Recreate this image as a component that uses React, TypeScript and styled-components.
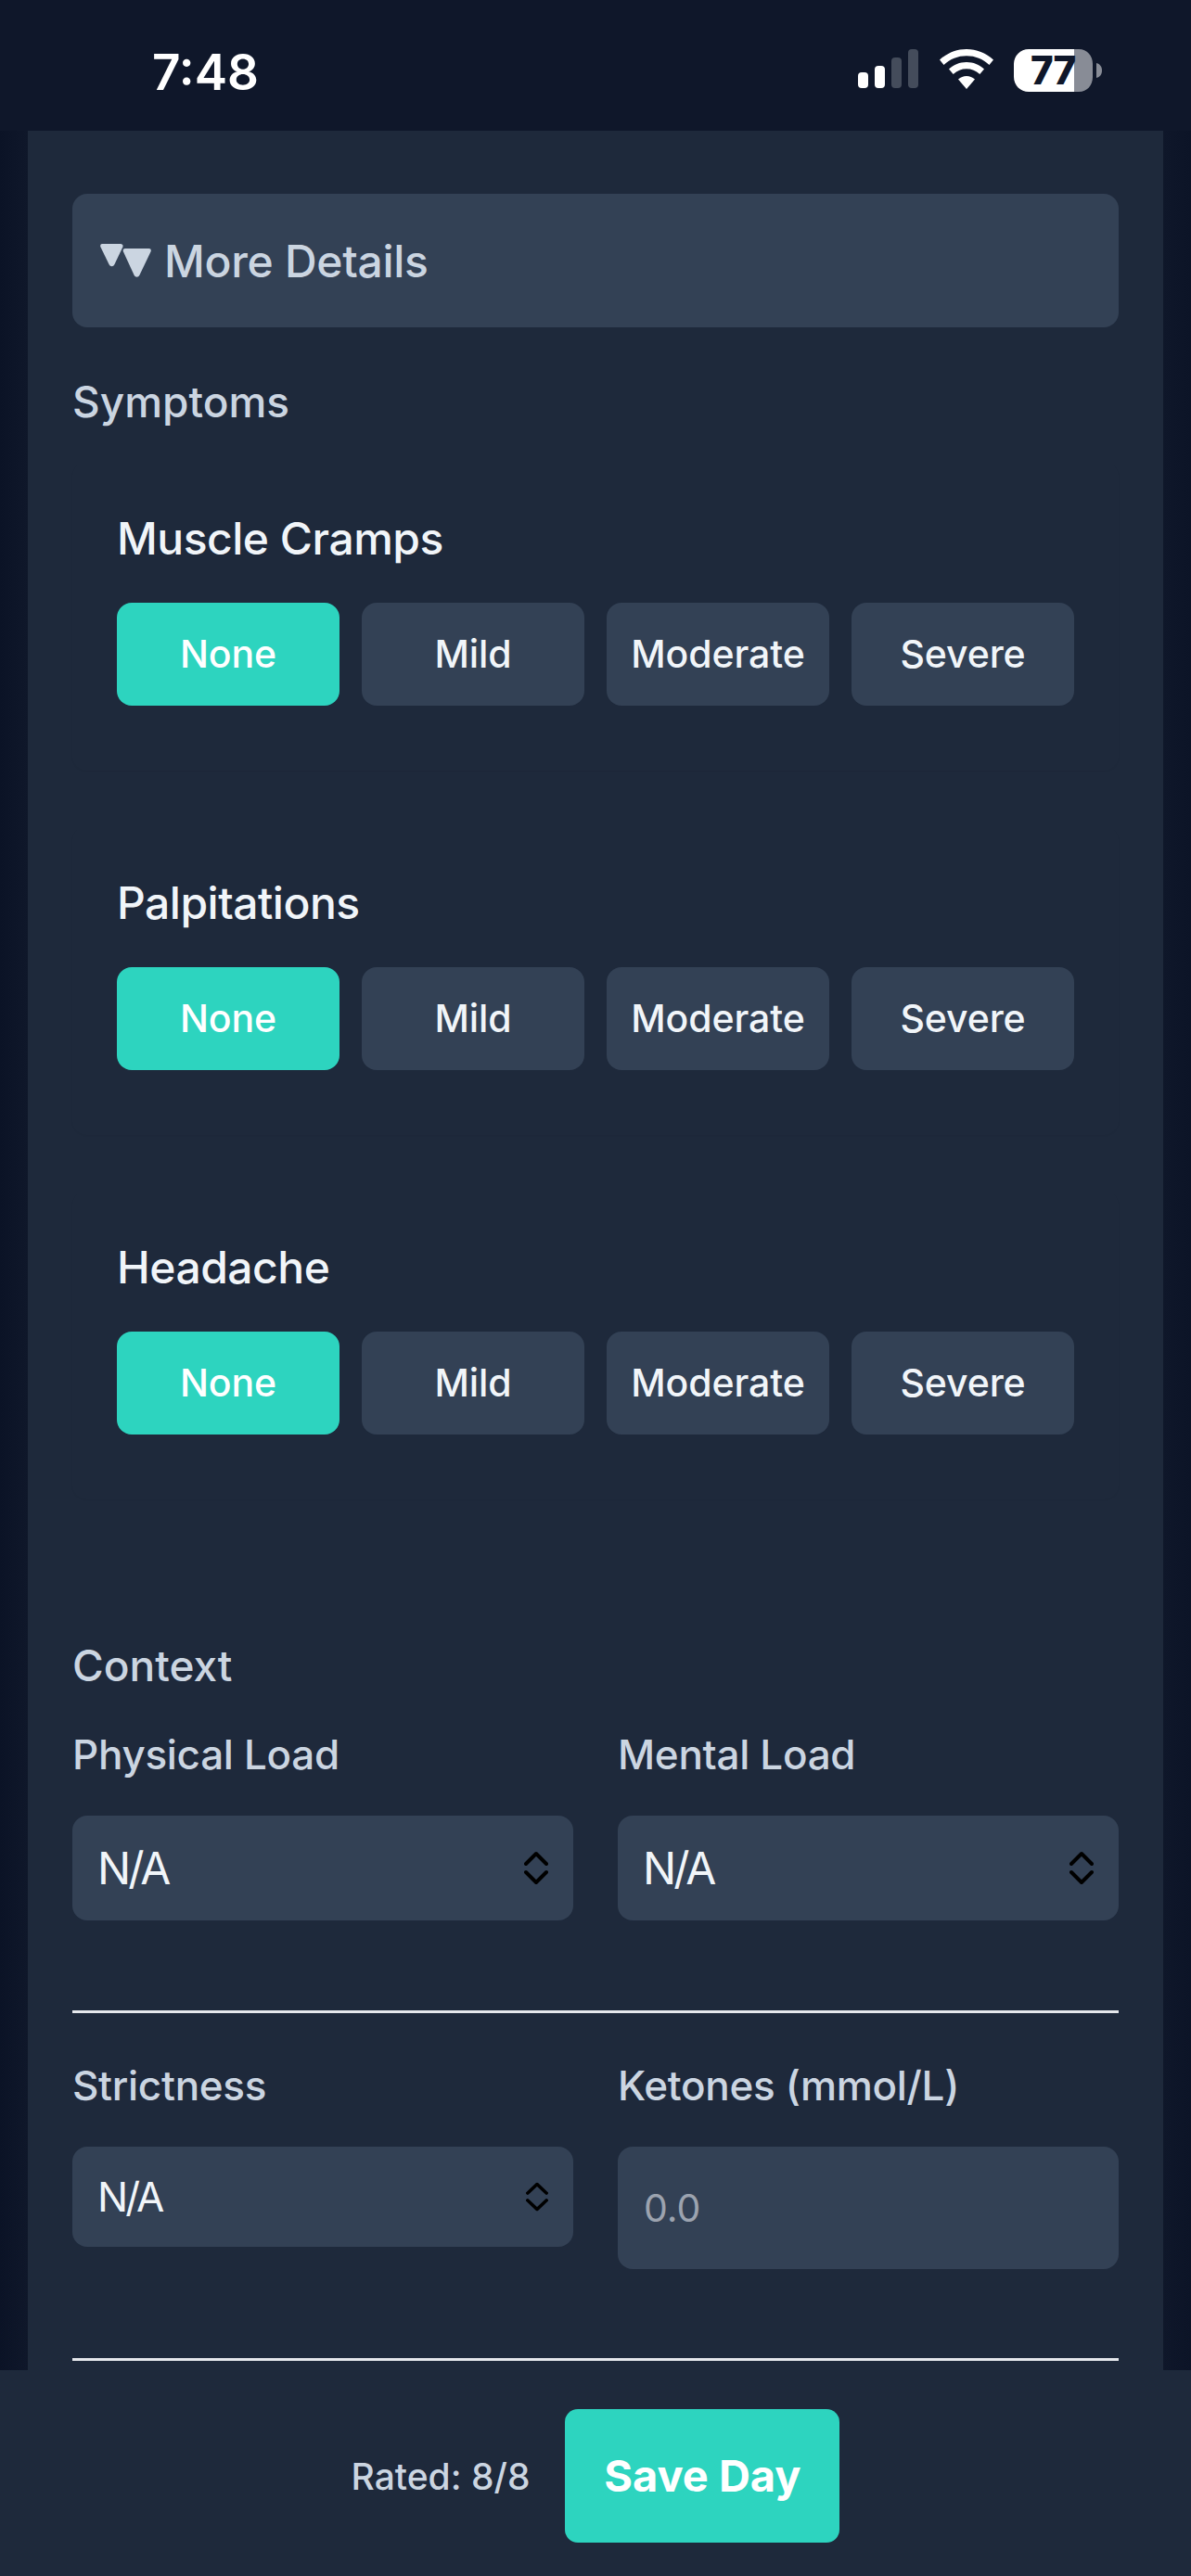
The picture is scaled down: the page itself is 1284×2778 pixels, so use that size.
import React from "react";
import styled, { createGlobalStyle } from "styled-components";

const Global = createGlobalStyle`
  html, body { margin: 0; padding: 0; background: #0f172a; }
  #root { width: 1284px; height: 2778px; overflow: hidden; }
  * { box-sizing: border-box; }
`;

const Screen = styled.div`
  width: 1284px;
  height: 2778px;
  display: flex;
  flex-direction: column;
  background: #0f172a;
  font-family: Inter, "Liberation Sans", sans-serif;
  overflow: hidden;
`;

const StatusBar = styled.div`
  height: 141px;
  flex: none;
  display: flex;
  align-items: flex-start;
  justify-content: space-between;
  padding: 50px 96px 0 164px;
  background: #0f172a;
`;

const Clock = styled.div`
  font-size: 53px;
  line-height: 56px;
  font-weight: 600;
  color: #fff;
`;

const StatusIcons = styled.div`
  display: flex;
  align-items: flex-start;
  gap: 22.5px;
  padding-top: 3px;
`;

const BatteryIcon = styled.svg`
  overflow: visible;
`;

const Middle = styled.div`
  flex: 1;
  min-height: 0;
  padding: 0 30px;
  background: linear-gradient(90deg, #0b1326 0, #0f172a 30px, #0f172a 1254px, #0c1427 1284px);
`;

const Panel = styled.main`
  height: 100%;
  padding: 68px 48px 0;
  background: #1e293b;
  overflow: hidden;
`;

const Disclosure = styled.div`
  height: 144px;
  display: flex;
  align-items: center;
  gap: 14px;
  padding: 2px 30px 0;
  border-radius: 16px;
  background: #334155;
  color: #cbd5e1;
  font-size: 48px;
  font-weight: 500;
  line-height: 58px;
  letter-spacing: -0.3px;
`;

const Marker = styled.svg`
  width: 55px;
  height: 36px;
  margin-top: -2px;
  flex: none;
`;

const SectionTitle = styled.h2<{ $top: number }>`
  margin: ${(p) => p.$top}px 0 0;
  font-size: 46px;
  line-height: 56px;
  font-weight: 500;
  color: #cbd5e1;
`;

const SymptomList = styled.div`
  margin-top: 37px;
  display: flex;
  flex-direction: column;
  gap: 60px;
`;

const SymptomCard = styled.section`
  height: 333px;
  padding: 48px;
  border-radius: 16px;
  box-shadow: 0 1px 2px rgba(0, 0, 0, 0.04);
`;

const SymptomName = styled.h3`
  margin: 0 0 35px;
  height: 69px;
  display: flex;
  align-items: center;
  font-size: 48px;
  line-height: 58px;
  font-weight: 550;
  letter-spacing: -0.5px;
  color: #f1f5f9;
`;

const SeverityRow = styled.div`
  display: grid;
  grid-template-columns: repeat(4, 1fr);
  gap: 24px;
`;

const Severity = styled.button<{ $on?: boolean }>`
  height: 111px;
  padding: 0 0 2px;
  border: 0;
  border-radius: 16px;
  font: 550 41px/50px Inter, "Liberation Sans", sans-serif;
  letter-spacing: -0.1px;
  color: ${(p) => (p.$on ? "#ffffff" : "#f1f5f9")};
  background: ${(p) => (p.$on ? "#2dd4bf" : "#334155")};
`;

const FieldGrid = styled.div<{ $top: number }>`
  display: grid;
  grid-template-columns: 540px 540px;
  gap: 48px;
  align-items: start;
  margin-top: ${(p) => p.$top}px;
`;

const Field = styled.div`
  display: flex;
  flex-direction: column;
`;

const FieldLabel = styled.label`
  height: 56px;
  margin-bottom: 38px;
  display: flex;
  align-items: center;
  font-size: 44px;
  font-weight: 500;
  letter-spacing: -0.3px;
  color: #cbd5e1;
`;

const SelectBox = styled.div<{ $h: number; $size: number }>`
  height: ${(p) => p.$h}px;
  display: flex;
  align-items: center;
  justify-content: space-between;
  padding: 0 27px 0 27px;
  border-radius: 16px;
  background: #334155;
  color: #f1f5f9;
  font-size: ${(p) => p.$size}px;
  font-weight: 400;
  letter-spacing: -3px;
`;

const InputBox = styled.div`
  height: 132px;
  display: flex;
  align-items: center;
  padding: 0 28px;
  border-radius: 16px;
  background: #334155;
  color: #9ca3af;
  font-size: 41px;
`;

const Rule = styled.hr<{ $top: number }>`
  margin: ${(p) => p.$top}px 0 0;
  border: 0;
  height: 3px;
  background: #e5e7eb;
`;

const Footer = styled.footer`
  flex: none;
  height: 222px;
  display: flex;
  align-items: flex-start;
  justify-content: center;
  gap: 38px;
  padding: 42px 0 0;
  background: #1e293b;
`;

const Rated = styled.span`
  height: 144px;
  display: flex;
  align-items: center;
  font-size: 39px;
  font-weight: 550;
  color: #cbd5e1;
`;

const Save = styled.button`
  width: 296px;
  height: 144px;
  border: 0;
  border-radius: 14px;
  background: #2dd4bf;
  color: #fff;
  font: 700 47px/58px Inter, "Liberation Sans", sans-serif;
`;

const Updown = ({ w = 26, h = 37 }: { w?: number; h?: number }) => (
  <svg width={w} height={h} viewBox="0 0 26 37" fill="none" stroke="#000" strokeWidth="4" strokeLinecap="round" strokeLinejoin="round" preserveAspectRatio="none">
    <path d="M2 14 13 3l11 11" />
    <path d="M2 23l11 11 11-11" />
  </svg>
);

const levels = ["None", "Mild", "Moderate", "Severe"];
const symptoms = ["Muscle Cramps", "Palpitations", "Headache"];

export default function App() {
  return (
    <Screen>
      <Global />
      <StatusBar>
        <Clock>7:48</Clock>
        <StatusIcons>
          <svg width="65" height="42" viewBox="0 0 65 42">
            <rect x="0" y="25" width="11" height="17" rx="4" fill="#fff" />
            <rect x="18" y="18" width="11" height="24" rx="4" fill="#fff" />
            <rect x="36" y="9" width="11" height="33" rx="4" fill="#444c5b" />
            <rect x="54" y="0" width="11" height="42" rx="4" fill="#444c5b" />
          </svg>
          <svg width="58" height="43" viewBox="0 0 58 43" fill="#fff">
            <path d="M29 0C18 0 8.500 4 0 11.500L4.500 17C11.500 10.500 19.500 7.200 29 7.200S46.500 10.500 53.500 17L58 11.500C49.500 4 40 0 29 0Z" />
            <path d="M29 14C21.500 14 15.500 16.700 10 21.500L14.700 27C19 23.200 23.500 21.300 29 21.300S39 23.200 43.300 27L48 21.500C42.500 16.700 36.500 14 29 14Z" />
            <path d="M29 29C25.500 29 22.800 30.200 20 32.500L29 43L38 32.500C35.200 30.200 32.500 29 29 29Z" />
          </svg>
          <BatteryIcon width="95" height="46" viewBox="0 0 95 46">
            <path d="M16 0H65V46H16C7 46 0 39 0 30V16C0 7 7 0 16 0Z" fill="#fff" />
            <path d="M65 0H70C79 0 85 7 85 16V30C85 39 79 46 70 46H65Z" fill="#888c96" />
            <path d="M89 15C93 16 95 19 95 23S93 30 89 31Z" fill="#888c96" />
            <text x="42" y="38" textAnchor="middle" fontFamily="Inter, sans-serif" fontWeight="800" fontSize="42" letterSpacing="-1" fill="#0f172a">77</text>
          </BatteryIcon>
        </StatusIcons>
      </StatusBar>
      <Middle>
        <Panel>
          <Disclosure>
            <Marker viewBox="0 0 55 36" fill="#cbd5e1">
              <path d="M2 0H22C24 0 25 1.500 24.300 3.500L15.500 22C14 25 11 25 9.500 22L0.500 3.500C-.3 1.500 .5 0 2 0Z" />
              <path d="M27 5H52.500C54.500 5 55.300 6.500 54.500 8.500L42.500 33.500C41 36.500 38 36.500 36.500 33.500L25 8.500C24.200 6.500 25 5 27 5Z" />
            </Marker>
            More Details
          </Disclosure>
          <SectionTitle $top={52}>Symptoms</SectionTitle>
          <SymptomList>
            {symptoms.map((name) => (
              <SymptomCard key={name}>
                <SymptomName>{name}</SymptomName>
                <SeverityRow>
                  {levels.map((l, i) => (
                    <Severity key={l} $on={i === 0}>{l}</Severity>
                  ))}
                </SeverityRow>
              </SymptomCard>
            ))}
          </SymptomList>
          <SectionTitle $top={151}>Context</SectionTitle>
          <FieldGrid $top={40}>
            <Field>
              <FieldLabel>Physical Load</FieldLabel>
              <SelectBox $h={113} $size={48}>N/A<Updown /></SelectBox>
            </Field>
            <Field>
              <FieldLabel>Mental Load</FieldLabel>
              <SelectBox $h={113} $size={48}>N/A<Updown /></SelectBox>
            </Field>
          </FieldGrid>
          <Rule $top={97} />
          <FieldGrid $top={50}>
            <Field>
              <FieldLabel>Strictness</FieldLabel>
              <SelectBox $h={108} $size={44}>N/A<Updown w={24} h={32} /></SelectBox>
            </Field>
            <Field>
              <FieldLabel>Ketones (mmol/L)</FieldLabel>
              <InputBox>0.0</InputBox>
            </Field>
          </FieldGrid>
          <Rule $top={96} />
        </Panel>
      </Middle>
      <Footer>
        <Rated>Rated: 8/8</Rated>
        <Save>Save Day</Save>
      </Footer>
    </Screen>
  );
}
